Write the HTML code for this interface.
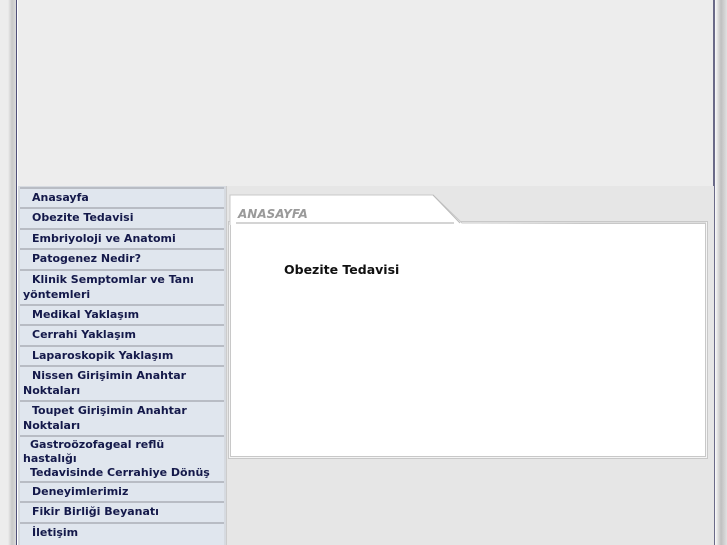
<html><head><style>
body{margin:0;width:727px;height:545px;background:#ededed;position:relative;overflow:hidden;font-family:"DejaVu Sans",Verdana,sans-serif}
.a{position:absolute}
.mi{position:absolute;left:20px;width:204px;background:#e0e6ee;border-top:2px solid #b8bcc4;box-sizing:border-box;font-weight:bold;font-size:11px;color:#14194a;line-height:15px;padding:1px 0 0 3px}
.mi span{padding-left:9px}
</style></head><body>
<div class="a" style="left:8px;top:0;width:8px;height:545px;background:linear-gradient(90deg,#ececec,#c8c8c8,#dadada)"></div>
<div class="a" style="left:16px;top:0;width:1px;height:545px;background:#505078"></div>
<div class="a" style="left:17px;top:0;width:1px;height:545px;background:#fff"></div>
<div class="a" style="left:713px;top:0;width:2px;height:545px;background:#6a6a88"></div>
<div class="a" style="left:715px;top:0;width:12px;height:545px;background:linear-gradient(90deg,#fafafa,#c0c0c0,#e0e0e0)"></div>
<div class="a" style="left:18px;top:186px;width:208px;height:359px;background:#d6dae0"></div>
<div class="mi" style="top:187px;height:21px"><span>Anasayfa</span></div>
<div class="mi" style="top:207px;height:22px"><span>Obezite Tedavisi</span></div>
<div class="mi" style="top:228px;height:21px"><span>Embriyoloji ve Anatomi</span></div>
<div class="mi" style="top:248px;height:22px"><span>Patogenez Nedir?</span></div>
<div class="mi" style="top:269px;height:36px"><span>Klinik Semptomlar ve Tanı</span><br>yöntemleri</div>
<div class="mi" style="top:304px;height:21px"><span>Medikal Yaklaşım</span></div>
<div class="mi" style="top:324px;height:22px"><span>Cerrahi Yaklaşım</span></div>
<div class="mi" style="top:345px;height:21px"><span>Laparoskopik Yaklaşım</span></div>
<div class="mi" style="top:365px;height:36px"><span>Nissen Girişimin Anahtar</span><br>Noktaları</div>
<div class="mi" style="top:400px;height:36px"><span>Toupet Girişimin Anahtar</span><br>Noktaları</div>
<div class="mi" style="top:435px;height:47px;padding-top:1px;line-height:14px"><span style="padding-left:7px">Gastroözofageal reflü</span><br>hastalığı<br><span style="padding-left:7px">Tedavisinde Cerrahiye Dönüş</span></div>
<div class="mi" style="top:481px;height:21px"><span>Deneyimlerimiz</span></div>
<div class="mi" style="top:501px;height:22px"><span>Fikir Birliği Beyanatı</span></div>
<div class="mi" style="top:522px;height:23px"><span>İletişim</span></div>
<div class="a" style="left:226px;top:186px;width:487px;height:359px;background:#e6e6e6;border-left:1px solid #ccc"></div>
<div class="a" style="left:228px;top:221px;width:478px;height:236px;border:1px solid #c8c8c8;background:#f4f4f4"></div>
<div class="a" style="left:230px;top:223px;width:474px;height:232px;border:1px solid #c8c8c8;background:#fff"></div>
<svg class="a" style="left:228px;top:193px" width="480" height="32"><path d="M2 32V2H205L234 30H478" fill="#fff" stroke="#c8c8c8"/><path d="M205 2L232 30" stroke="#bbb"/><line x1="8" y1="30" x2="226" y2="30" stroke="#aaa"/></svg>
<div class="a" style="left:238px;top:207px;font-size:12px;font-style:italic;font-weight:bold;color:#9a9a9a">ANASAYFA</div>
<div class="a" style="left:284px;top:262px;font-size:12.5px;font-weight:bold;color:#111">Obezite Tedavisi</div>
</body></html>
